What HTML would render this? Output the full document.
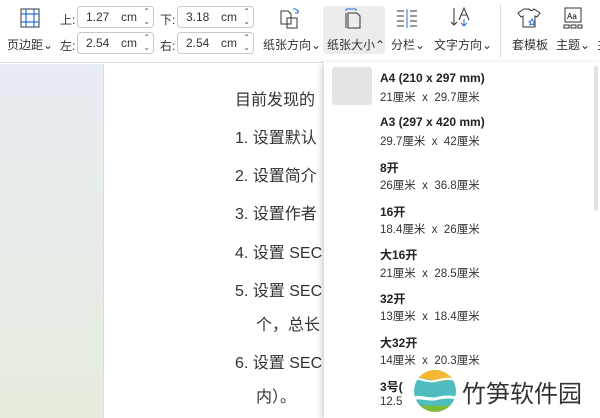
<!DOCTYPE html>
<html><head><meta charset="utf-8"><style>
*{margin:0;padding:0;box-sizing:border-box}
body{width:600px;height:418px;overflow:hidden;position:relative;font-family:"Liberation Sans","Noto Sans CJK SC",sans-serif;color:#333;background:#fff}
.abs{position:absolute}
.tb{left:0;top:0;width:600px;height:63px;background:#fff;border-bottom:1px solid #ddd}
.lbl{font-size:12px;color:#333;white-space:nowrap}
.inp{height:22px;width:77px;border:1px solid #c8c8c8;border-radius:4px;font-size:12px;padding:3px 0 0 8px;color:#333}
.inp .u{position:absolute;left:43px;top:3px}
.inp .ar{position:absolute;right:3px;top:0px;font-size:8px;line-height:10px;color:#555}
.left{left:0;top:64px;width:103px;height:354px;background:linear-gradient(#e8ecf3,#e6edde)}
.page{left:103px;top:64px;width:221px;height:354px;background:#fff;border-left:1px solid #ddd}
.doc{font-size:16px;color:#333;white-space:nowrap}
.dd{left:324px;top:62px;width:276px;height:356px;background:#fff;box-shadow:-2px 2px 6px rgba(0,0,0,.2)}
.t{font-size:12px;font-weight:bold;color:#222;white-space:nowrap;left:380px}
.s{font-size:11.5px;color:#333;white-space:nowrap;left:380px}
</style></head><body>
<div class="abs tb"></div>
<!-- margins icon -->
<svg class="abs" style="left:18px;top:6px" width="24" height="24"><rect x="3" y="3" width="18" height="18" fill="none" stroke="#333"/><path d="M3 8H21M3 16H21M8 3V21M16 3V21" stroke="#2a6fd6" stroke-width="1.2"/></svg>
<div class="abs lbl" style="left:7px;top:36px">页边距⌄</div>
<div class="abs lbl" style="left:60px;top:11px">上:</div>
<div class="abs lbl" style="left:60px;top:37px">左:</div>
<div class="abs lbl" style="left:160px;top:11px">下:</div>
<div class="abs lbl" style="left:160px;top:37px">右:</div>
<div class="abs inp" style="left:77px;top:6px">1.27<span class="u">cm</span><span class="ar">⌃<br>⌄</span></div>
<div class="abs inp" style="left:77px;top:32px">2.54<span class="u">cm</span><span class="ar">⌃<br>⌄</span></div>
<div class="abs inp" style="left:177px;top:6px">3.18<span class="u">cm</span><span class="ar">⌃<br>⌄</span></div>
<div class="abs inp" style="left:177px;top:32px">2.54<span class="u">cm</span><span class="ar">⌃<br>⌄</span></div>
<svg class="abs" style="left:278px;top:6px" width="24" height="24"><path d="M3 5h7l3 3v10H3z M9 12h10v10H9z" fill="#fff" stroke="#333"/><path d="M15 3a4 4 0 0 1 5 4M20 4v3h-3" fill="none" stroke="#2a6fd6"/></svg>
<div class="abs lbl" style="left:263px;top:36px">纸张方向⌄</div>
<div class="abs" style="left:323px;top:6px;width:62px;height:48px;background:#ececec;border-radius:4px"></div>
<svg class="abs" style="left:341px;top:6px" width="24" height="24"><path d="M5 3H15M5 3v2M15 3v2" stroke="#2a6fd6"/><path d="M5 7v15M7 7h9l3 3v12H7z" fill="none" stroke="#333"/></svg>
<div class="abs lbl" style="left:327px;top:36px">纸张大小⌃</div>
<svg class="abs" style="left:395px;top:7px" width="24" height="22"><path d="M2 4h7M2 9h7M2 14h7M2 19h7M15 4h7M15 9h7M15 14h7M15 19h7" stroke="#333"/><path d="M12 2v19" stroke="#2a6fd6"/></svg>
<div class="abs lbl" style="left:391px;top:36px">分栏⌄</div>
<svg class="abs" style="left:449px;top:5px" width="24" height="24"><path d="M5 3v17M2 17l3 3 3-3" fill="none" stroke="#333"/><path d="M10 15l5-12 5 12M12 10h6" fill="none" stroke="#333"/><path d="M15 14v7M12 18l3 3 3-3" fill="none" stroke="#2a6fd6"/></svg>
<div class="abs lbl" style="left:434px;top:36px">文字方向⌄</div>
<div class="abs" style="left:500px;top:4px;width:1px;height:54px;background:#ddd"></div>
<svg class="abs" style="left:516px;top:6px" width="26" height="24"><path d="M8 3l-6 4 3 4 2-1v11h12V10l2 1 3-4-6-4c-1 2-4 2-5 0z" fill="none" stroke="#333"/><path d="M16 13l1 2 2 .5-1.5 1.5.5 2-2-1-2 1 .5-2L13 15.5l2-.5z" fill="none" stroke="#2a6fd6"/></svg>
<div class="abs lbl" style="left:512px;top:36px">套模板</div>
<svg class="abs" style="left:562px;top:6px" width="22" height="24"><rect x="3" y="2" width="16" height="14" fill="none" stroke="#333"/><text x="5" y="13" font-size="8" font-family="Liberation Sans">Aa</text><path d="M2 19h5v3H2zM9 19h5v3H9zM16 19h4v3h-4z" fill="none" stroke="#333"/></svg>
<div class="abs lbl" style="left:556px;top:36px">主题⌄</div>
<div class="abs lbl" style="left:597px;top:36px">主</div>

<div class="abs left"></div>
<div class="abs page"></div>
<div class="abs doc" style="left:235px;top:86px">目前发现的</div>
<div class="abs doc" style="left:235px;top:124px">1. 设置默认</div>
<div class="abs doc" style="left:235px;top:162px">2. 设置简介</div>
<div class="abs doc" style="left:235px;top:200px">3. 设置作者</div>
<div class="abs doc" style="left:235px;top:239px">4. 设置 SEC</div>
<div class="abs doc" style="left:235px;top:277px">5. 设置 SEC</div>
<div class="abs doc" style="left:256px;top:311px">个，总长</div>
<div class="abs doc" style="left:235px;top:349px">6. 设置 SEC</div>
<div class="abs doc" style="left:256px;top:383px">内）。</div>

<div class="abs dd"></div>
<div class="abs" style="left:332px;top:67px;width:40px;height:38px;background:#e4e4e4;border-radius:3px"></div>
<div class="abs" style="left:594px;top:66px;width:4px;height:145px;background:#e2e2e2;border-radius:2px"></div>
<div class="abs t" style="top:71px">A4 (210 x 297 mm)</div><div class="abs s" style="top:89px">21厘米 &nbsp;x &nbsp;29.7厘米</div>
<div class="abs t" style="top:115px">A3 (297 x 420 mm)</div><div class="abs s" style="top:133px">29.7厘米 &nbsp;x &nbsp;42厘米</div>
<div class="abs t" style="top:159px">8开</div><div class="abs s" style="top:177px">26厘米 &nbsp;x &nbsp;36.8厘米</div>
<div class="abs t" style="top:203px">16开</div><div class="abs s" style="top:221px">18.4厘米 &nbsp;x &nbsp;26厘米</div>
<div class="abs t" style="top:246px">大16开</div><div class="abs s" style="top:265px">21厘米 &nbsp;x &nbsp;28.5厘米</div>
<div class="abs t" style="top:290px">32开</div><div class="abs s" style="top:308px">13厘米 &nbsp;x &nbsp;18.4厘米</div>
<div class="abs t" style="top:334px">大32开</div><div class="abs s" style="top:352px">14厘米 &nbsp;x &nbsp;20.3厘米</div>
<div class="abs t" style="top:378px">3号(</div><div class="abs s" style="top:396px">12.5</div>

<svg class="abs" style="left:413px;top:369px" width="44" height="44"><defs><clipPath id="c"><circle cx="22" cy="22" r="21"/></clipPath></defs><g clip-path="url(#c)"><rect width="44" height="44" fill="#4fbcc0"/><path d="M0 0h44v12c-8-4-14 2-22 0S6 8 0 10z" fill="#f5b730"/><path d="M0 10c6-2 14 4 22 2s14-4 22 0" stroke="#fff" stroke-width="2" fill="none"/><path d="M0 28c8-3 16 2 24 0s14-2 20 0v16H0z" fill="#fff"/><path d="M0 31c8-2 16 2 24 0s14-2 20 0v6H0z" fill="#4fbcc0"/><path d="M0 37c10-2 20 1 44-1v8H0z" fill="#7dbb3a"/></g></svg>
<div class="abs" style="left:462px;top:374px;font-size:24px;color:#333;white-space:nowrap">竹笋软件园</div>
</body></html>
